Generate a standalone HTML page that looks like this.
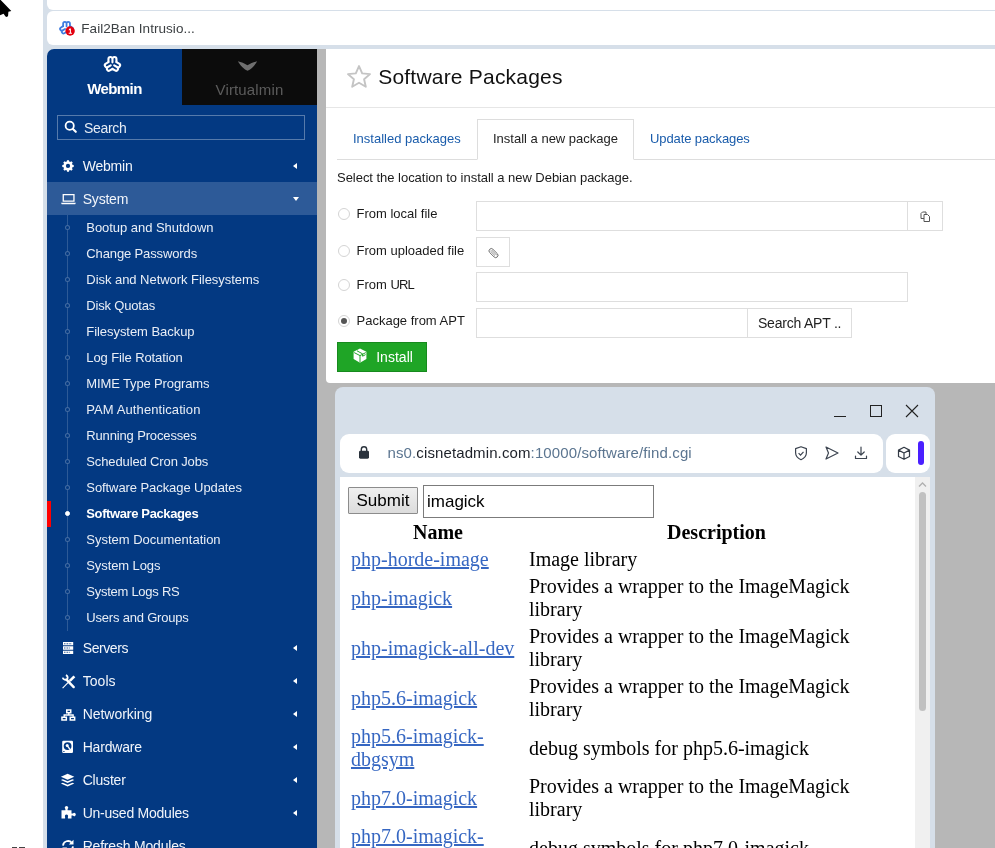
<!DOCTYPE html>
<html>
<head>
<meta charset="utf-8">
<title>Software Packages</title>
<style>
*{box-sizing:border-box;}
html,body{margin:0;padding:0;}
body{width:995px;height:848px;overflow:hidden;position:relative;background:#b7b7b7;font-family:"Liberation Sans",sans-serif;}
.abs{position:absolute;}
/* outer chrome */
#leftwhite{left:0;top:0;width:43px;height:848px;background:#fff;}
#leftstrip{left:43px;top:0;width:4px;height:848px;background:#d6dfe9;}
#topband{left:43px;top:0;width:952px;height:49px;background:#d6dfe9;}
#tab0{left:47px;top:-10px;width:960px;height:20px;background:#fff;border-radius:6px;}
#tab1{left:47px;top:11px;width:960px;height:34px;background:#fff;border-radius:6px;}
#tab1 .t{position:absolute;left:34.300px;top:9.800px;font-size:13.500px;letter-spacing:0.050px;color:#3c4043;white-space:nowrap;}
/* sidebar */
#side{left:47px;top:49px;width:270px;height:799px;background:#033982;border-top-left-radius:7px;overflow:hidden;color:#fff;}
#vtab{left:135px;top:0;width:135px;height:56px;background:#0c0c0c;}
#wlabel{left:0;top:31px;width:135px;text-align:center;font-weight:bold;font-size:15px;letter-spacing:-0.600px;color:#fff;}
#vlabel{left:135px;top:32px;width:135px;text-align:center;font-size:15px;letter-spacing:0.150px;color:#5c5c5c;}
#search{left:10px;top:66px;width:248px;height:25px;border:1px solid rgba(255,255,255,.33);}
#search span{position:absolute;left:26px;top:3.600px;font-size:14px;letter-spacing:-0.300px;color:#e6ecf4;}
.top{position:absolute;left:0;width:270px;height:33px;}
.top .l{position:absolute;left:35.700px;top:8.500px;font-size:14px;letter-spacing:-0.200px;color:#f2f5fa;white-space:nowrap;}
.top .ar{position:absolute;left:246px;top:13px;width:0;height:0;border-top:3.5px solid transparent;border-bottom:3.5px solid transparent;border-right:4px solid #fff;}
.top .ad{position:absolute;left:245.500px;top:15px;width:0;height:0;border-left:3.5px solid transparent;border-right:3.5px solid transparent;border-top:4px solid #fff;}
.top svg{position:absolute;left:13px;top:8.500px;}
.sub{position:absolute;left:39.300px;font-size:13px;color:#e9eef6;white-space:nowrap;}
.dot{position:absolute;left:18px;width:5px;height:5px;border-radius:50%;border:1px solid rgba(255,255,255,.26);background:#033982;margin-top:0.700px;}
#vline{left:20px;top:166px;width:1px;height:416px;background:rgba(255,255,255,.17);}
/* main */
#main{left:326px;top:49px;width:669px;height:334px;background:#fff;border-bottom-left-radius:4px;}
#title{left:52.200px;top:15.600px;font-size:21px;letter-spacing:0.210px;color:#111;white-space:nowrap;}
#hline{left:0;top:58px;width:669px;height:1px;background:#e6e6e6;}
.tab{position:absolute;top:82px;font-size:13px;color:#1a5cab;white-space:nowrap;}
#acttab{left:151px;top:70px;width:157px;height:41px;border:1px solid #ddd;border-bottom:1px solid #fff;background:#fff;}
#tline{left:11px;top:110px;width:658px;height:1px;background:#ddd;}
.txt{position:absolute;font-size:13px;color:#1a1a1a;white-space:nowrap;}
.radio{position:absolute;left:12px;width:12px;height:12px;border-radius:50%;border:1px solid #d4d4d4;background:#fff;}
.inp{position:absolute;border:1px solid #dedede;background:#fff;height:30px;}
#install{left:11px;top:293px;width:90px;height:30px;background:#1fa526;border:1px solid #178a1e;color:#fff;font-size:14px;}
/* popup */
#pop{left:335px;top:387px;width:600px;height:480px;background:#d6dfe9;border-radius:8px;}
#url{left:5px;top:47px;width:543px;height:39px;background:#fff;border-radius:9px;}
#pill{left:551px;top:47px;width:44px;height:39px;background:#fff;border-radius:9px;}
#purple{left:583px;top:54px;width:6px;height:24px;background:#4a1fff;border-radius:3px;}
#content{left:5px;top:90px;width:575px;height:400px;background:#fff;overflow:hidden;font-family:"Liberation Serif",serif;font-size:20px;color:#000;}
#sb{left:580px;top:90px;width:15px;height:400px;background:#f0f0f0;}
#thumb{left:584px;top:105px;width:7px;height:219px;background:#c1c1c1;border-radius:4px;}
#content table{position:absolute;left:8px;top:41px;border-spacing:2px;border-collapse:separate;table-layout:fixed;width:557px;}
#content td,#content th{padding:1px 1px 1px 1px;line-height:23px;vertical-align:middle;}
#content a{color:#3667c2;text-decoration:underline;}
</style>
</head>
<body>
<div id="wrap" class="abs" style="left:0;top:0;width:995px;height:848px;overflow:hidden;will-change:transform">
<div id="topband" class="abs"></div>
<div id="leftwhite" class="abs"></div>
<div id="leftstrip" class="abs"></div>
<div id="tab0" class="abs"></div>
<div id="tab1" class="abs"><svg class="abs" style="left:5px;top:5px" width="28" height="28" viewBox="0 0 28 28"><g transform="translate(14.550,12.100)" fill="none" stroke="#3f7de0" stroke-width="1.800" stroke-linecap="round" stroke-linejoin="round"><path d="M-3.40,-1.96V-4.50A1.70,1.70 0 0 1 0,-4.50V-1.70M0,-4.50A1.70,1.70 0 0 1 3.40,-4.50V-1.96"/><path d="M-3.40,-1.96V-4.50A1.70,1.70 0 0 1 0,-4.50V-1.70M0,-4.50A1.70,1.70 0 0 1 3.40,-4.50V-1.96" transform="rotate(120)"/><path d="M-3.40,-1.96V-4.50A1.70,1.70 0 0 1 0,-4.50V-1.70M0,-4.50A1.70,1.70 0 0 1 3.40,-4.50V-1.96" transform="rotate(240)"/></g><circle cx="18.100" cy="15" r="4.700" fill="#e3000f"/><path fill="#fff" d="M17.600,12.600h1.300v4.100h1v1H16.700v-1h1.200V13.900l-1.100,0.500V13.400z"/></svg><span class="t">Fail2Ban Intrusio...</span></div>
<svg class="abs" style="left:0;top:0" width="16" height="22" viewBox="0 0 16 22"><path fill="#000" stroke="#fff" stroke-width="2.400" paint-order="stroke" stroke-linejoin="round" d="M-2,-2.500L0.500,-0.200L11.300,10.900L8.400,11.700L8.100,15.800Q7.500,17.600 5.500,16.600L3.600,13.700L-2,16Z"/></svg>
<div class="abs" style="left:12px;top:847px;width:5px;height:1px;background:#444"></div><div class="abs" style="left:19px;top:847px;width:6px;height:1px;background:#444"></div>

<div class="abs" style="left:47px;top:49px;width:12px;height:12px;background:#d6dfe9"></div>
<div id="side" class="abs">
  <div id="vtab" class="abs"></div>
  <svg class="abs" style="left:50px;top:0" width="32" height="32" viewBox="0 0 32 32"><g transform="translate(15.450,15.350)" fill="none" stroke="#fff" stroke-width="2.100" stroke-linecap="round" stroke-linejoin="round"><path d="M-4.00,-2.31V-5.30A2.00,2.00 0 0 1 0,-5.30V-2.00M0,-5.30A2.00,2.00 0 0 1 4.00,-5.30V-2.31"/><path d="M-4.00,-2.31V-5.30A2.00,2.00 0 0 1 0,-5.30V-2.00M0,-5.30A2.00,2.00 0 0 1 4.00,-5.30V-2.31" transform="rotate(120)"/><path d="M-4.00,-2.31V-5.30A2.00,2.00 0 0 1 0,-5.30V-2.00M0,-5.30A2.00,2.00 0 0 1 4.00,-5.30V-2.31" transform="rotate(240)"/></g></svg>
  <svg class="abs" style="left:190px;top:11px" width="22" height="12" viewBox="0 0 22 12"><path fill="#6f6f6f" d="M0.800,1.300Q6,2.500 10.500,5.200Q15,2.500 20.200,1.300Q15.500,9 10.500,10.700Q5.500,9 0.800,1.300Z"/></svg>
  <div id="wlabel" class="abs">Webmin</div>
  <div id="vlabel" class="abs">Virtualmin</div>
  <div id="search" class="abs"><svg class="abs" style="left:6px;top:4.300px" width="14" height="14" viewBox="0 0 14 14"><circle cx="5.700" cy="5.700" r="4.100" fill="none" stroke="#fff" stroke-width="1.800"/><path stroke="#fff" stroke-width="2.100" stroke-linecap="round" d="M8.900 8.900l2.900 2.900"/></svg><span>Search</span></div>
  <div id="vline" class="abs"></div>
  <!--ITEMS-->
  <div class="top" style="top:100.5px;"><svg width="16" height="16" viewBox="0 0 16 16"><path fill="#fff" fill-rule="evenodd" d="M6.900 2h2.200l0.350 1.500 1.050 0.450 1.300-0.800 1.550 1.550-0.800 1.300 0.450 1.050 1.500 0.350v2.200l-1.500 0.350-0.450 1.050 0.800 1.300-1.550 1.550-1.300-0.800-1.050 0.450-0.350 1.500H6.900l-0.350-1.500-1.050-0.450-1.300 0.800-1.550-1.550 0.800-1.300-0.450-1.050-1.500-0.350V7.400l1.500-0.350 0.450-1.050-0.800-1.300 1.550-1.550 1.300 0.800 1.050-0.450zM8 6.100a2.400 2.400 0 100 4.800 2.400 2.400 0 000-4.800z" transform="translate(0.960,0.460) scale(0.880)"/></svg><span class="l">Webmin</span><i class="ar"></i></div>
  <div class="top" style="top:133.0px;background:#2d5a98;"><svg width="17" height="16" viewBox="0 0 17 16"><path fill="#fff" fill-rule="evenodd" d="M2.600 3.400h12v7.800H2.600zM3.900 4.700v5.200h9.400V4.700zM1 12.100h14.900l-0.700 1.600H1.700z" transform="translate(0,-0.400)"/></svg><span class="l">System</span><i class="ad"></i></div>
  <div class="dot" style="top:175px"></div>
  <div class="sub" style="top:170.5px;letter-spacing:-0.042px">Bootup and Shutdown</div>
  <div class="dot" style="top:201px"></div>
  <div class="sub" style="top:196.5px;letter-spacing:-0.125px">Change Passwords</div>
  <div class="dot" style="top:227px"></div>
  <div class="sub" style="top:222.5px;letter-spacing:-0.043px">Disk and Network Filesystems</div>
  <div class="dot" style="top:253px"></div>
  <div class="sub" style="top:248.5px;letter-spacing:-0.173px">Disk Quotas</div>
  <div class="dot" style="top:279px"></div>
  <div class="sub" style="top:274.5px;letter-spacing:-0.053px">Filesystem Backup</div>
  <div class="dot" style="top:305px"></div>
  <div class="sub" style="top:300.5px;letter-spacing:-0.112px">Log File Rotation</div>
  <div class="dot" style="top:331px"></div>
  <div class="sub" style="top:326.5px;letter-spacing:-0.133px">MIME Type Programs</div>
  <div class="dot" style="top:357px"></div>
  <div class="sub" style="top:352.5px;letter-spacing:0.094px">PAM Authentication</div>
  <div class="dot" style="top:383px"></div>
  <div class="sub" style="top:378.5px;letter-spacing:-0.147px">Running Processes</div>
  <div class="dot" style="top:409px"></div>
  <div class="sub" style="top:404.5px;letter-spacing:-0.126px">Scheduled Cron Jobs</div>
  <div class="dot" style="top:435px"></div>
  <div class="sub" style="top:430.5px;letter-spacing:-0.079px">Software Package Updates</div>
  <div class="abs" style="left:0;top:452px;width:4px;height:26px;background:#f00"></div>
  <div class="dot" style="top:461px;background:#fff;border-color:#fff"></div>
  <div class="sub" style="top:456.5px;font-weight:bold;letter-spacing:-0.382px;color:#fff">Software Packages</div>
  <div class="dot" style="top:487px"></div>
  <div class="sub" style="top:482.5px;letter-spacing:-0.005px">System Documentation</div>
  <div class="dot" style="top:513px"></div>
  <div class="sub" style="top:508.5px;letter-spacing:-0.100px">System Logs</div>
  <div class="dot" style="top:539px"></div>
  <div class="sub" style="top:534.5px;letter-spacing:-0.264px">System Logs RS</div>
  <div class="dot" style="top:565px"></div>
  <div class="sub" style="top:560.5px;letter-spacing:-0.200px">Users and Groups</div>
  <div class="top" style="top:582.5px;"><svg width="16" height="16" viewBox="0 0 16 16"><path fill="#fff" d="M3 2h10.200v3.300H3zM3 6.350h10.200v3.300H3zM3 10.700h10.200V14H3z"/><path fill="#033982" d="M4 3.200h0.800v1H4zM5.600 3.200h0.800v1H5.600zM7.200 3.200h0.800v1H7.200zM8.800 3.200h0.800v1H8.800zM10.400 3.200h0.800v1h-0.800zM4 7.550h0.800v1H4zM5.600 7.550h0.800v1H5.600zM7.200 7.550h0.800v1H7.200zM8.800 7.550h0.800v1H8.800zM4 11.850h0.800v1H4zM5.600 11.850h0.800v1H5.600zM7.200 11.850h0.800v1H7.200zM8.800 11.850h0.800v1H8.800z"/></svg><span class="l" style="letter-spacing:-0.4px">Servers</span><i class="ar"></i></div>
  <div class="top" style="top:615.5px;"><svg width="17" height="17" viewBox="0 0 17 17"><path fill="none" stroke="#fff" stroke-width="2.400" stroke-linecap="round" d="M6.500 6.700l7.200 7.400"/><path fill="none" stroke="#fff" stroke-width="1.800" d="M2.700 4.600a2.700 2.700 0 004.700 1.200a2.700 2.700 0 00-1.500-3.700"/><path fill="none" stroke="#fff" stroke-width="2.600" d="M14.400 3.300l-4.600 4.600"/><path fill="none" stroke="#fff" stroke-width="1.100" d="M10 7.700L2.600 15.200"/></svg><span class="l" style="letter-spacing:0.04px">Tools</span><i class="ar"></i></div>
  <div class="top" style="top:648.5px;"><svg width="17" height="16" viewBox="0 0 17 16"><path fill="none" stroke="#fff" stroke-width="1.500" d="M6.750 3.950h4v2.800h-4zM1.950 11.250h4.400v2.700h-4.400zM10.250 11.250h4.400v2.700h-4.400z"/><path fill="none" stroke="#fff" stroke-width="1.300" d="M8.750 6.700v2.300M4.150 11V9h9v2"/></svg><span class="l" style="letter-spacing:-0.035px">Networking</span><i class="ar"></i></div>
  <div class="top" style="top:681.5px;"><svg width="16" height="16" viewBox="0 0 16 16"><path fill="#fff" fill-rule="evenodd" d="M3.400 1.700h8.400a1.200 1.200 0 011.200 1.200v9.800a1.200 1.200 0 01-1.200 1.200H3.400a1.200 1.200 0 01-1.200-1.200V2.900a1.200 1.200 0 011.200-1.200zM7.600 3.200a3.900 3.900 0 100 7.800 3.900 3.900 0 000-7.800z"/><circle cx="7.200" cy="6.500" r="1.500" fill="#fff"/><path stroke="#fff" stroke-width="1.400" d="M7.400 6.800l2.800 3.800"/><path fill="#033982" d="M3.300 12h1.200v0.900H3.300z"/></svg><span class="l">Hardware</span><i class="ar"></i></div>
  <div class="top" style="top:714.5px;"><svg width="16" height="16" viewBox="0 0 16 16"><path fill="#fff" d="M7.600 1.700l6.700 3-6.700 3-6.700-3z"/><path fill="#fff" d="M0.900 8l1.900-0.850 4.800 2.150 4.800-2.150 1.900 0.850-6.700 3zM0.900 11.500l1.900-0.850 4.800 2.150 4.800-2.150 1.900 0.850-6.700 3z"/></svg><span class="l">Cluster</span><i class="ar"></i></div>
  <div class="top" style="top:747.5px;"><svg width="17" height="16" viewBox="0 0 17 16"><path fill="#fff" d="M1.500 5.300h3.900v-1.300a1.700 1.700 0 112.200 0v1.300h3.900v3.100h1.500a1.600 1.600 0 110 2.200h-1.500v2.900H7.900v-1.600a1.600 1.600 0 10-2.800 0v1.600H1.500z"/></svg><span class="l" style="letter-spacing:-0.237px">Un-used Modules</span><i class="ar"></i></div>
  <div class="top" style="top:780.5px;"><svg width="16" height="16" viewBox="0 0 16 16"><path fill="none" stroke="#fff" stroke-width="1.800" d="M3 7.600a5 5 0 018.800-2.800M13 8.400a5 5 0 01-8.800 2.800"/><path fill="#fff" d="M13.500 1.800v4.700H8.800zM2.500 14.200V9.500h4.700z"/></svg><span class="l">Refresh Modules</span><i class="none"></i></div>
  <!--/ITEMS-->
</div>

<div id="main" class="abs">
  <svg class="abs" style="left:20px;top:15px" width="26" height="26" viewBox="0 0 26 26"><path fill="none" stroke="#c4c4c4" stroke-width="1.900" stroke-linejoin="round" d="M13 2.100L16.200 9.400L24 10.100L18.100 15.200L19.800 22.700L13 18.700L6.200 22.700L7.900 15.200L2 10.100L9.800 9.400Z"/></svg>
  <div id="title" class="abs">Software Packages</div>
  <div id="hline" class="abs"></div>
  <div id="tline" class="abs"></div>
  <div id="acttab" class="abs"></div>
  <div class="tab" style="left:27px">Installed packages</div>
  <div class="tab" style="left:167px;color:#222">Install a new package</div>
  <div class="tab" style="left:324px;letter-spacing:-0.100px">Update packages</div>
  <div class="txt" style="left:11px;top:121px;letter-spacing:-0.030px">Select the location to install a new Debian package.</div>

  <div class="radio" style="top:159px"></div><div class="txt" style="left:30.500px;top:157px">From local file</div>
  <div class="inp" style="left:150px;top:152px;width:432px"></div>
  <div class="inp" style="left:581px;top:152px;width:36px"><svg class="abs" style="left:11px;top:9px" width="12" height="12" viewBox="0 0 12 12"><path fill="none" stroke="#555" stroke-width="1" d="M5 3.500h3.500l2 2v5H5zM5 7.500h-3v-5l1.500-1.500h3.500v2.500"/></svg></div>

  <div class="radio" style="top:196px"></div><div class="txt" style="left:30.500px;top:194px">From uploaded file</div>
  <div class="inp" style="left:150px;top:188px;width:34px"><svg class="abs" style="left:8px;top:7px" width="16" height="16" viewBox="0 0 16 16"><g transform="translate(8.500,8.100) rotate(45)" fill="none" stroke="#666"><rect x="-5.400" y="-2.300" width="10.800" height="4.600" rx="2.300" stroke-width="0.900"/><path stroke-width="0.700" d="M-3.600,-0.800H4M-3.600,0.700H2.800"/></g></svg></div>

  <div class="radio" style="top:230px"></div><div class="txt" style="left:30.500px;top:228px">From <span style="letter-spacing:-0.900px">URL</span></div>
  <div class="inp" style="left:150px;top:223px;width:432px"></div>

  <div class="radio" style="top:266px"><i class="abs" style="left:2px;top:2px;width:6px;height:6px;border-radius:50%;background:#555"></i></div><div class="txt" style="left:30.500px;top:264px">Package from APT</div>
  <div class="inp" style="left:150px;top:259px;width:272px"></div>
  <div class="inp" style="left:421px;top:259px;width:105px"><span class="abs" style="left:10px;top:6px;font-size:14px;letter-spacing:-0.220px;color:#222;white-space:nowrap">Search APT ..</span></div>

  <div id="install" class="abs"><svg class="abs" style="left:13px;top:4px" width="18" height="18" viewBox="0 0 18 18"><path fill="#fff" d="M9 1.600l6.400 3.200v7.200L9 15.700l-6.400-3.700V4.800z"/><path fill="none" stroke="#1fa526" stroke-width="1" d="M9 15.500V8.600M9 8.600L3.200 5.600M9 8.600l5.800-3M6 3.800l5.600 3.100v2.300l3-1.600"/></svg><span class="abs" style="left:38.200px;top:6px;letter-spacing:0.020px">Install</span></div>
</div>

<div id="pop" class="abs">
  <!-- window controls -->
  <div class="abs" style="left:499px;top:29px;width:12px;height:1px;background:#222"></div>
  <div class="abs" style="left:535px;top:18px;width:12px;height:12px;border:1px solid #222"></div>
  <svg class="abs" style="left:570px;top:17px" width="14" height="14" viewBox="0 0 14 14"><path stroke="#222" stroke-width="1.100" d="M1 1l12 12M13 1L1 13"/></svg>
  <div id="url" class="abs">
    <svg class="abs" style="left:18px;top:11px" width="12" height="15" viewBox="0 0 12 15"><path fill="none" stroke="#2a323c" stroke-width="1.400" d="M3.300 6.500V4.400a2.700 2.700 0 015.400 0v2.100"/><rect x="1" y="5.700" width="10" height="8" rx="1.400" fill="#2a323c"/></svg>
    <div class="abs" style="left:47.500px;top:9.800px;font-size:15px;letter-spacing:0.115px;color:#5b7590;white-space:nowrap">ns0.<span style="color:#1d2129">cisnetadmin.com</span>:10000/software/find.cgi</div>
    <svg class="abs" style="left:453px;top:11px" width="16" height="17" viewBox="0 0 16 17"><path fill="none" stroke="#3c4450" stroke-width="1.200" stroke-linejoin="round" d="M8 1.700l5.400 1.900v4.200c0 3.300-2.400 5.600-5.400 6.900-3-1.300-5.400-3.600-5.400-6.900V3.600z"/><path fill="none" stroke="#3c4450" stroke-width="1.200" d="M5.600 8.200l1.900 1.900 3-3.300"/></svg>
    <svg class="abs" style="left:484px;top:11px" width="16" height="16" viewBox="0 0 16 16"><path fill="none" stroke="#3c4450" stroke-width="1.200" stroke-linejoin="round" d="M2 2l12 6-12 6 2.500-6z"/></svg>
    <svg class="abs" style="left:513px;top:11px" width="16" height="16" viewBox="0 0 16 16"><path fill="none" stroke="#3c4450" stroke-width="1.200" stroke-linecap="round" stroke-linejoin="round" d="M8 2v8M4.800 7L8 10.200 11.200 7M2.500 11v2.500h11V11"/></svg>
  </div>
  <div id="pill" class="abs">
    <svg class="abs" style="left:10px;top:11px" width="16" height="17" viewBox="0 0 16 17"><path fill="none" stroke="#333b46" stroke-width="1.200" stroke-linejoin="round" d="M8 2.300l5.500 2.800v6.400L8 14.300l-5.500-2.800V5.100zM2.500 5.100L8 8l5.500-2.900M8 8v6.300"/></svg>
  </div>
  <div id="purple" class="abs"></div>
  <div id="content" class="abs">
    <div class="abs" style="left:8px;top:10px;width:70px;height:27px;border:1px solid #8c8c8c;background:linear-gradient(#efefef,#dcdcdc);border-radius:1px;font-family:'Liberation Sans',sans-serif;font-size:17px;text-align:center;line-height:26px;color:#000">Submit</div>
    <div class="abs" style="left:83px;top:8px;width:231px;height:33px;border:1px solid #7b7b7b;background:#fff;font-family:'Liberation Sans',sans-serif;font-size:17px;line-height:31px;padding-left:3px;color:#000">imagick</div>
    <table>
      <tr><th style="width:176px">Name</th><th style="width:377px">Description</th></tr>
      <tr><td><a>php-horde-image</a></td><td>Image library</td></tr>
      <tr><td><a>php-imagick</a></td><td>Provides a wrapper to the ImageMagick library</td></tr>
      <tr><td><a>php-imagick-all-dev</a></td><td>Provides a wrapper to the ImageMagick library</td></tr>
      <tr><td><a>php5.6-imagick</a></td><td>Provides a wrapper to the ImageMagick library</td></tr>
      <tr><td><a>php5.6-imagick-dbgsym</a></td><td>debug symbols for php5.6-imagick</td></tr>
      <tr><td><a>php7.0-imagick</a></td><td>Provides a wrapper to the ImageMagick library</td></tr>
      <tr><td><a>php7.0-imagick-dbgsym</a></td><td>debug symbols for php7.0-imagick</td></tr>
    </table>
  </div>
  <div id="sb" class="abs"><svg class="abs" style="left:3px;top:4px" width="9" height="7" viewBox="0 0 9 7"><path fill="none" stroke="#b0b0b0" stroke-width="1.300" d="M1 5.500l3.500-3.500 3.500 3.500"/></svg></div>
  <div id="thumb" class="abs"></div>
</div>
</div>
</body>
</html>
